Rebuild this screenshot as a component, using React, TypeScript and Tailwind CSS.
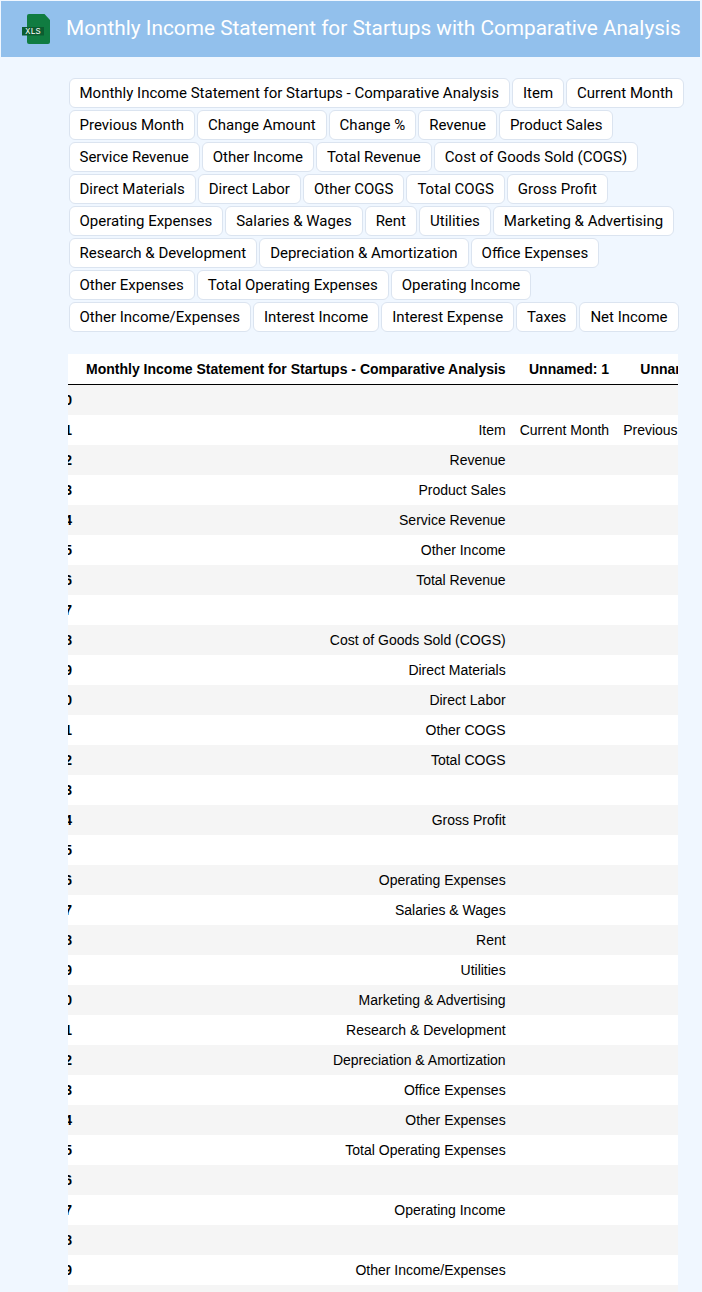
const tags = [
  'Monthly Income Statement for Startups - Comparative Analysis', 'Item', 'Current Month', 'Previous Month', 'Change Amount', 'Change %',
  'Revenue', 'Product Sales', 'Service Revenue', 'Other Income', 'Total Revenue', 'Cost of Goods Sold (COGS)', 'Direct Materials',
  'Direct Labor', 'Other COGS', 'Total COGS', 'Gross Profit', 'Operating Expenses', 'Salaries & Wages', 'Rent', 'Utilities',
  'Marketing & Advertising', 'Research & Development', 'Depreciation & Amortization', 'Office Expenses', 'Other Expenses',
  'Total Operating Expenses', 'Operating Income', 'Other Income/Expenses', 'Interest Income', 'Interest Expense', 'Taxes', 'Net Income',
];

const rows = [
  '', 'Item', 'Revenue', 'Product Sales', 'Service Revenue', 'Other Income', 'Total Revenue', '', 'Cost of Goods Sold (COGS)',
  'Direct Materials', 'Direct Labor', 'Other COGS', 'Total COGS', '', 'Gross Profit', '', 'Operating Expenses', 'Salaries & Wages',
  'Rent', 'Utilities', 'Marketing & Advertising', 'Research & Development', 'Depreciation & Amortization', 'Office Expenses',
  'Other Expenses', 'Total Operating Expenses', '', 'Operating Income', '', 'Other Income/Expenses', 'Interest Income',
];

function XlsIcon() {
  return (
    <svg width="30" height="32" viewBox="0 0 30 32" className="shrink-0">
      <path d="M6 3a2 2 0 0 1 2-2h15.5l5.5 6v22a2 2 0 0 1-2 2H8a2 2 0 0 1-2-2z" fill="#107c41" />
      <rect x="1" y="14" width="22" height="8.5" fill="#0b5c30" />
      <text x="12" y="21" textAnchor="middle" fontSize="8.5" fill="#ffffff" fontFamily="'Liberation Mono', monospace">XLS</text>
    </svg>
  );
}

export default function App() {
  return (
    <div className="h-[1292px] overflow-hidden bg-[#f0f7ff] pt-px pl-px pr-[2px] font-['Roboto',sans-serif]">
      <header className="flex h-14 items-center gap-[15px] bg-[#92c0ec] pl-[20px]">
        <XlsIcon />
        <h1 className="whitespace-nowrap text-[20.8px] font-normal text-white">
          Monthly Income Statement for Startups with Comparative Analysis
        </h1>
      </header>

      <div className="mt-5 ml-[66.5px] w-[620px]">
        <div className="flex flex-wrap">
          {tags.map((tag) => (
            <span key={tag} className="m-px rounded-md border border-[#dbe4f0] bg-white px-[10px] py-[3px] text-[15px] leading-[22px] text-black">
              {tag}
            </span>
          ))}
        </div>
      </div>

      <div className="mt-[21px] ml-[67px] w-[610px] overflow-hidden bg-white">
        <table className="-ml-[18.5px] border-collapse whitespace-nowrap font-['Liberation_Sans',sans-serif] text-[14px] leading-4 text-black">
          <thead>
            <tr className="border-b border-black">
              <th className="w-[30px] p-[7px]"></th>
              <th className="p-[7px] text-right font-bold">Monthly Income Statement for Startups - Comparative Analysis</th>
              <th className="p-[7px] text-right font-bold">Unnamed: 1</th>
              <th className="p-[7px] text-right font-bold">Unnamed: 2</th>
            </tr>
          </thead>
          <tbody>
            {rows.map((label, i) => (
              <tr key={i} className={i % 2 === 0 ? 'h-[30px] bg-[#f5f5f5]' : 'h-[30px] bg-white'}>
                <th className="p-[7px] text-right font-bold">{i}</th>
                <td className="p-[7px] text-right">{label}</td>
                <td className="p-[7px] text-right">{i === 1 ? 'Current Month' : ''}</td>
                <td className="p-[7px] text-right">{i === 1 ? 'Previous Month' : ''}</td>
              </tr>
            ))}
          </tbody>
        </table>
      </div>
    </div>
  );
}
